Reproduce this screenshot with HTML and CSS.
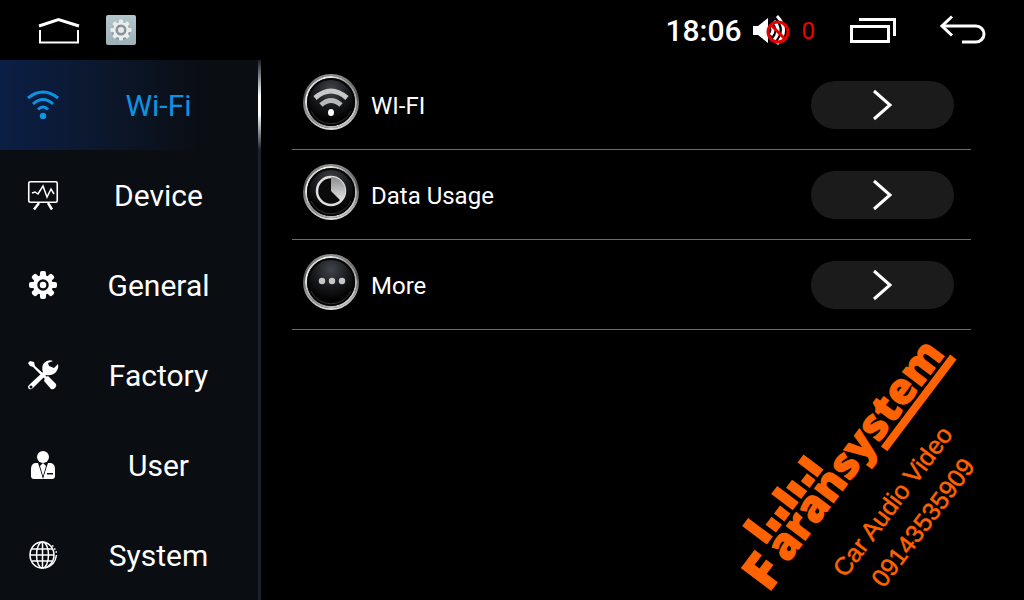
FILE: index.html
```html
<!DOCTYPE html>
<html lang="en">
<head>
<meta charset="utf-8">
<title>Settings</title>
<link rel="stylesheet" href="styles.css">
</head>
<body>
<svg class="defs" aria-hidden="true">
  <defs>
    <linearGradient id="rim" x1="0" y1="0" x2="1" y2="1">
      <stop offset="0" stop-color="#8a8a8a"/><stop offset=".2" stop-color="#f4f4f4"/><stop offset=".5" stop-color="#8c8c8c"/><stop offset=".72" stop-color="#b0b0b0"/><stop offset="1" stop-color="#eee"/>
    </linearGradient>
    <linearGradient id="outer" x1="0" y1="0" x2="0" y2="1">
      <stop offset="0" stop-color="#909090"/><stop offset=".4" stop-color="#555"/><stop offset="1" stop-color="#dcdcdc"/>
    </linearGradient>
    <radialGradient id="face" cx=".5" cy=".25" r=".6">
      <stop offset="0" stop-color="#41454b"/><stop offset=".55" stop-color="#1a1b1e"/><stop offset="1" stop-color="#030303"/>
    </radialGradient>
    <linearGradient id="silver" x1="0" y1="0" x2="0" y2="1">
      <stop offset="0" stop-color="#8c8c8c"/><stop offset="1" stop-color="#e6e6e6"/>
    </linearGradient>
    <linearGradient id="plate" x1="0" y1="0" x2="0" y2="1">
      <stop offset="0" stop-color="#b3c5cd"/><stop offset="1" stop-color="#9eb0b8"/>
    </linearGradient>
    <symbol id="disc" viewBox="0 0 56 56">
      <circle cx="28" cy="28" r="27" fill="#111" stroke="url(#outer)" stroke-width="2"/>
      <circle cx="28" cy="28" r="25" fill="url(#face)" stroke="url(#rim)" stroke-width="2"/>
      <circle cx="28" cy="28" r="23" fill="none" stroke="#050505" stroke-width="2"/>
      <path d="M8 37a22 22 0 0 0 40 0" fill="none" stroke="#303030"/>
    </symbol>
  </defs>
</svg>

<header class="topbar">
  <button class="icon-btn" aria-label="Home">
    <svg width="42" height="28" viewBox="0 0 42 28" fill="none" stroke="#fff" stroke-width="2"><path d="M1 10 20.500 3.500 41 10" stroke-width="3"/><path d="M2 14v12.500h38V14"/></svg>
  </button>
  <button class="icon-btn" aria-label="Settings app">
    <svg width="30" height="30" viewBox="0 0 30 30">
      <rect width="30" height="30" rx="2" fill="url(#plate)"/>
      <g transform="translate(15 16)" fill="#8799a1" opacity=".8"><circle r="9.500"/></g>
      <g transform="translate(15 15)" fill="#e9edee">
        <g id="teeth"><rect x="-2" y="-10.500" width="4" height="21" rx="1"/><rect x="-10.500" y="-2" width="21" height="4" rx="1"/></g>
        <use href="#teeth" transform="rotate(45)"/>
        <circle r="8"/><circle r="5.500" fill="#87959b"/><circle r="3" fill="#e6eaeb"/><circle cx="-2" cy="-4" r="1" fill="#c0607a"/>
      </g>
    </svg>
  </button>
  <div class="status">
    <time class="clock">18:06</time>
    <div class="volume">
      <svg width="38" height="32" viewBox="0 0 38 32" fill="none">
        <path d="M1 12h5l10-8v25l-10-8H1z" fill="#fff"/>
        <path d="M19 11q4 5 0 10M22 7q8 9 0 19M25 2q13 14 0 28" stroke="#fff" stroke-width="3"/>
        <circle cx="26" cy="18" r="10" stroke="#e80000" stroke-width="3"/><path d="m19 11 14 14" stroke="#e80000" stroke-width="3"/>
      </svg>
      <span class="level">0</span>
    </div>
    <button class="icon-btn" aria-label="Recent apps">
      <svg width="48" height="28" viewBox="0 0 48 28" fill="none" stroke="#fff"><path d="M2.500 10.500h37v15h-37z" stroke-width="3"/><path d="M10 3.500h35.500V20" stroke-width="3"/></svg>
    </button>
    <button class="icon-btn" aria-label="Back">
      <svg width="48" height="30" viewBox="0 0 48 30" fill="none" stroke="#fff" stroke-width="3"><path d="M3 11h34a8 8 0 0 1 0 16H23"/><path d="M13 1.500 3 11l10 9.500"/></svg>
    </button>
  </div>
</header>

<div class="layout">
  <nav class="sidebar">
    <a class="tab active" href="#wifi" aria-current="page">
      <svg width="32" height="32" viewBox="0 0 32 32" fill="none" stroke="#0c93e4" stroke-width="3"><path d="M1 9q15-12 30 0M6 15q10-9 20 0M11 20.500q5-5 10 0"/><circle cx="16" cy="27" r="3.200" fill="#0c93e4" stroke="none"/></svg>
      <span>Wi-Fi</span>
    </a>
    <a class="tab" href="#device">
      <svg width="32" height="32" viewBox="0 0 32 32" fill="none" stroke="#fff"><rect x="1.750" y="2.750" width="28.500" height="20.500" rx="1.500" stroke-width="1.600"/><path d="m5 14 3-1 3 2 5-8 4 11 4-8 3 5" stroke-width="1.500"/><path d="m12 24-5 6.500M21 24l4 6.500" stroke-width="2.500"/></svg>
      <span>Device</span>
    </a>
    <a class="tab" href="#general">
      <svg width="32" height="32" viewBox="0 0 32 32">
        <g transform="translate(16 16)" fill="#fff">
          <g id="cog"><rect x="-3" y="-14" width="6" height="28" rx="2"/><rect x="-14" y="-3" width="28" height="6" rx="2"/></g>
          <use href="#cog" transform="rotate(45)"/>
          <circle r="10"/><circle r="4.500" fill="none" stroke="#0a0d12" stroke-width="2.500"/>
        </g>
      </svg>
      <span>General</span>
    </a>
    <a class="tab" href="#factory">
      <svg width="32" height="32" viewBox="0 0 32 32" fill="#fff">
        <path d="M1 4 3 2l4 1 1 4 12 11-2 2L6 8 3 7z"/>
        <path d="m21 17 8 8q1 2-1 4t-4 1l-7-8q1-4 4-5z"/>
        <path d="M26 2q-5-2-9 2-3 4-1 9L2 26q-2 2 0 4 2 1 4-1l13-13q6 1 10-3 3-4 2-8l-4 4-5-2-1-3zM4 26.500a1.500 1.500 0 1 1 0 3 1.500 1.500 0 0 1 0-3z" fill-rule="evenodd"/>
      </svg>
      <span>Factory</span>
    </a>
    <a class="tab" href="#user">
      <svg width="32" height="32" viewBox="0 0 32 32" fill="#fff"><circle cx="16" cy="8" r="6"/><path d="M8 14h3l5 15 5-15h3q4 1 4 6v7q0 3-3 3H7q-3 0-3-3v-7q0-5 4-6z"/><path d="m12 14 4 16 4-16z" fill="#0a0d12"/><path d="m16 14 3 3-3 10-3-10z"/><path d="M20 24h6v1.500h-6z" fill="#0a0d12"/></svg>
      <span>User</span>
    </a>
    <a class="tab" href="#system">
      <svg width="32" height="32" viewBox="0 0 32 32" fill="none" stroke="#fff" stroke-width="1.500"><ellipse cx="15" cy="16" rx="12" ry="13"/><ellipse cx="15.500" cy="16" rx="6" ry="13"/><path d="M15.500 3v26M3 16h24M5 10h20M5 22h20"/><path d="M18 29q10-2 11.500-13"/><path d="M25 7h1.500M27 10h1.500M28.500 13H30" stroke-width="1.500"/></svg>
      <span>System</span>
    </a>
  </nav>

  <main class="content">
    <ul class="options">
      <li class="option">
        <svg class="badge" viewBox="0 0 56 56" fill="none"><use href="#disc"/><path d="M12 24q16-14 32 0" stroke="#c8c8c8" stroke-width="5"/><path d="M18 31q10-9 20 0" stroke="#b8b8b8" stroke-width="5"/><ellipse cx="28" cy="38.500" rx="3" ry="3.500" fill="#fff"/></svg>
        <span class="name">WI-FI</span>
        <button class="open" aria-label="Open Wi-Fi"><svg width="22" height="32" viewBox="0 0 22 32"><path d="m2 2 16 14L2 30" fill="none" stroke="#fff" stroke-width="3"/></svg></button>
      </li>
      <li class="option">
        <svg class="badge" viewBox="0 0 56 56"><use href="#disc"/><circle cx="28" cy="27" r="14" fill="#0b0b0c" stroke="#dedede" stroke-width="2.500"/><path d="M28 27V13a14 14 0 0 1 10 24z" fill="url(#silver)"/></svg>
        <span class="name">Data Usage</span>
        <button class="open" aria-label="Open Data Usage"><svg width="22" height="32" viewBox="0 0 22 32"><path d="m2 2 16 14L2 30" fill="none" stroke="#fff" stroke-width="3"/></svg></button>
      </li>
      <li class="option">
        <svg class="badge" viewBox="0 0 56 56"><use href="#disc"/><g fill="#c8c8c8"><circle cx="19" cy="27" r="3.200"/><circle cx="29" cy="27" r="3.200"/><circle cx="39" cy="27" r="3.200"/></g></svg>
        <span class="name">More</span>
        <button class="open" aria-label="Open More"><svg width="22" height="32" viewBox="0 0 22 32"><path d="m2 2 16 14L2 30" fill="none" stroke="#fff" stroke-width="3"/></svg></button>
      </li>
    </ul>
  </main>
</div>

<svg class="watermark" width="260" height="270" viewBox="0 0 260 270">
  <g transform="translate(40 262) rotate(-53)" fill="#ff6200" stroke="#ff6200">
    <path stroke="none" d="M36 -62h10v31H36zM51 -44h10v13H51zM65 -44h10v13H65zM79 -58h10v27H79zM93 -50h10v19H93zM107 -42h10v11h-10zM120 -56h10v25h-10zM183 1h115v8H183z"/>
    <text class="brand" x="-2" y="0"><tspan class="initial">F</tspan><tspan x="33" y="-3">aransystem</tspan></text>
    <text class="tagline" x="56" y="52">Car Audio Video</text>
    <text class="tagline" x="71" y="89">09143535909</text>
  </g>
</svg>
</body>
</html>
```
FILE: styles.css
```css
* { box-sizing: border-box; }

body {
  margin: 0;
  min-height: 100vh;
  display: flex;
  flex-direction: column;
  position: relative;
  background: #000;
  color: #fff;
  font-family: Roboto, "Liberation Sans", sans-serif;
}

.defs { position: absolute; width: 0; height: 0; }

svg { display: block; flex: none; }

button {
  border: 0;
  padding: 0;
  background: none;
  color: inherit;
  font: inherit;
}

.topbar {
  display: flex;
  align-items: center;
  gap: 26px;
  height: 60px;
  padding: 0 37px 0 38px;
}

.status {
  display: flex;
  align-items: center;
  margin-left: auto;
  gap: 42px;
}

.clock {
  font-size: 30px;
  font-weight: 500;
  margin-right: -32px;
}

.volume { display: flex; align-items: center; gap: 12px; margin-right: -8px; }
.level { color: #f00000; font-size: 24px; padding-top: 2px; }

.layout { flex: 1; display: flex; }

.sidebar {
  flex: none;
  width: 261px;
  background: #0a0d12;
  border-right: 3px solid #1c1f2c;
}

.tab {
  position: relative;
  display: flex;
  align-items: center;
  height: 90px;
  padding-left: 27px;
  color: #fff;
  font-size: 30px;
  text-decoration: none;
}

.tab span { flex: 1; text-align: center; }

.tab.active {
  color: #0c93e4;
  background: linear-gradient(to right, #0b1f45, #0b1526 50%, #0a0d12 80%);
}

.tab.active::after {
  content: "";
  position: absolute;
  top: 0;
  right: -3px;
  width: 3px;
  height: 100%;
  background: linear-gradient(#1c1f2c, #fff 40%, #fff 60%, #1c1f2c);
}

.content { flex: 1; padding: 0 53px 0 31px; }

.options { list-style: none; margin: 0; padding: 0; }

.option {
  display: flex;
  align-items: center;
  gap: 12px;
  height: 90px;
  padding: 0 17px 0 11px;
  border-bottom: 1px solid #6c6c6c;
}

.badge { width: 56px; height: 56px; margin-bottom: 5px; }
.name { flex: 1; font-size: 24px; padding-top: 2px; }

.open {
  display: flex;
  align-items: center;
  justify-content: center;
  width: 143px;
  height: 48px;
  border-radius: 24px;
  background: #1b1b1b;
}

.watermark {
  position: absolute;
  right: 34px;
  bottom: 0;
  overflow: visible;
  pointer-events: none;
}

.brand {
  font-family: "Open Sans", sans-serif;
  font-weight: 800;
  font-size: 43px;
  stroke-width: 1;
}

.initial { font-size: 52px; }

.tagline {
  font-family: "Liberation Sans", Arial, sans-serif;
  font-size: 25px;
  stroke-width: 0.5;
}
```
